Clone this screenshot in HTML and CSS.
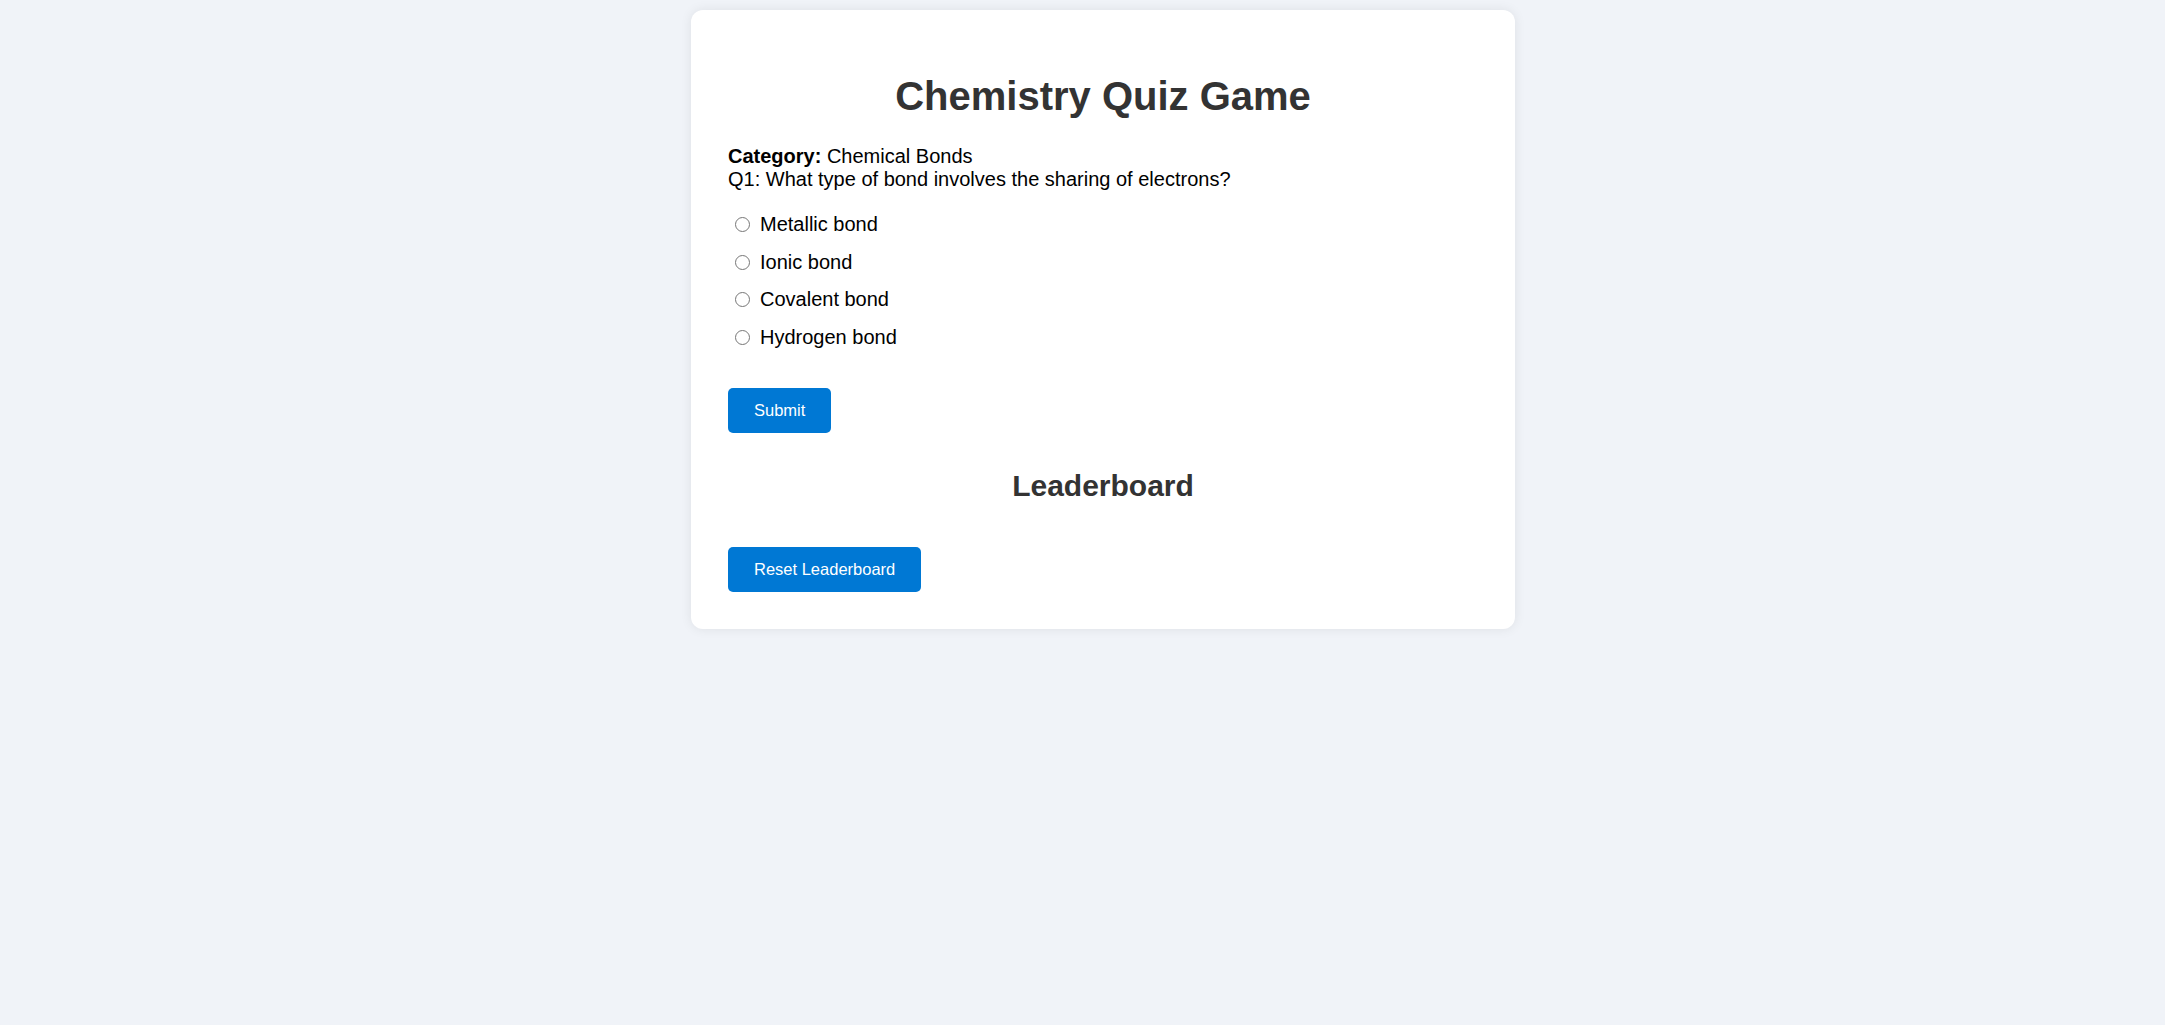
FILE: index.html
```html
<!DOCTYPE html>
<html lang="en">
<head>
<meta charset="utf-8">
<title>Chemistry Quiz Game</title>
<link rel="stylesheet" href="styles.css">
</head>
<body>
<main class="card">
  <h1 class="title">Chemistry Quiz Game</h1>
  <div class="question">
    <div><strong>Category:</strong> Chemical Bonds</div>
    <div>Q1: What type of bond involves the sharing of electrons?</div>
  </div>
  <div class="options">
    <label class="option"><input type="radio" name="answer" value="0"><span>Metallic bond</span></label>
    <label class="option"><input type="radio" name="answer" value="1"><span>Ionic bond</span></label>
    <label class="option"><input type="radio" name="answer" value="2"><span>Covalent bond</span></label>
    <label class="option"><input type="radio" name="answer" value="3"><span>Hydrogen bond</span></label>
  </div>
  <button class="btn submit" type="button">Submit</button>
  <h2 class="board-title">Leaderboard</h2>
  <button class="btn reset" type="button">Reset Leaderboard</button>
</main>
</body>
</html>
```

FILE: styles.css
```css
html, body {
  margin: 0;
  padding: 0;
}

body {
  background: #f0f3f8;
  font-family: Arial, "Liberation Sans", sans-serif;
  font-size: 20px;
  color: #000;
  padding: 10px 0 10px 41px;
}

.card {
  box-sizing: border-box;
  width: 824px;
  margin: 0 auto;
  background: #fff;
  border-radius: 12px;
  box-shadow: 0 0 12px rgba(0, 0, 0, 0.08);
  padding: 36px 37px 37px;
  display: flex;
  flex-direction: column;
  align-items: flex-start;
}

.title {
  align-self: stretch;
  text-align: center;
  font-size: 40px;
  line-height: 46px;
  font-weight: bold;
  color: #333;
  margin: 27px 0 26px;
}

.question {
  line-height: 23px;
}

.options {
  display: flex;
  flex-direction: column;
  margin-top: 15px;
}

.option {
  display: flex;
  align-items: center;
  height: 37.6px;
  line-height: 23px;
}

.option input {
  width: 15px;
  height: 15px;
  margin: 0 10px 0 7px;
}

.btn {
  font-family: Arial, "Liberation Sans", sans-serif;
  font-size: 16.5px;
  line-height: 19px;
  color: #fff;
  background: #0078d4;
  border: none;
  border-radius: 5px;
  padding: 13px 26px;
  height: 45px;
  cursor: pointer;
}

.submit {
  margin-top: 32px;
}

.board-title {
  align-self: stretch;
  text-align: center;
  font-size: 30px;
  line-height: 34px;
  font-weight: bold;
  color: #333;
  margin: 36px 0 44px;
}
```
